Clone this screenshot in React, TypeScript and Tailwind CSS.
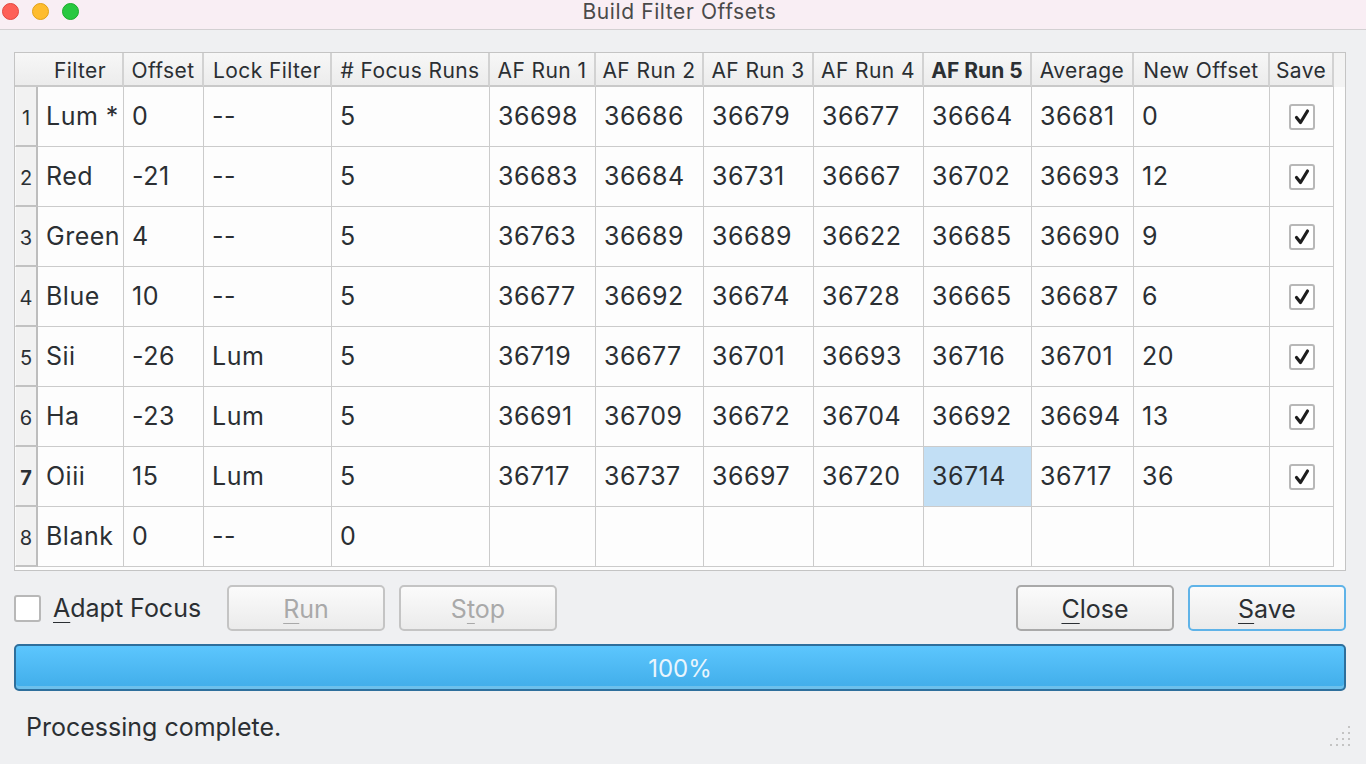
import { Fragment } from 'react'

type Row = {
  name: string
  offset: string
  lock: string
  runs: string
  af: string[]
  avg: string
  newOffset: string
  save: boolean
}

const rows: Row[] = [
  { name: 'Lum *', offset: '0', lock: '--', runs: '5', af: ['36698', '36686', '36679', '36677', '36664'], avg: '36681', newOffset: '0', save: true },
  { name: 'Red', offset: '-21', lock: '--', runs: '5', af: ['36683', '36684', '36731', '36667', '36702'], avg: '36693', newOffset: '12', save: true },
  { name: 'Green', offset: '4', lock: '--', runs: '5', af: ['36763', '36689', '36689', '36622', '36685'], avg: '36690', newOffset: '9', save: true },
  { name: 'Blue', offset: '10', lock: '--', runs: '5', af: ['36677', '36692', '36674', '36728', '36665'], avg: '36687', newOffset: '6', save: true },
  { name: 'Sii', offset: '-26', lock: 'Lum', runs: '5', af: ['36719', '36677', '36701', '36693', '36716'], avg: '36701', newOffset: '20', save: true },
  { name: 'Ha', offset: '-23', lock: 'Lum', runs: '5', af: ['36691', '36709', '36672', '36704', '36692'], avg: '36694', newOffset: '13', save: true },
  { name: 'Oiii', offset: '15', lock: 'Lum', runs: '5', af: ['36717', '36737', '36697', '36720', '36714'], avg: '36717', newOffset: '36', save: true },
  { name: 'Blank', offset: '0', lock: '--', runs: '0', af: ['', '', '', '', ''], avg: '', newOffset: '', save: false },
]

const headers = ['Filter', 'Offset', 'Lock Filter', '# Focus Runs', 'AF Run 1', 'AF Run 2', 'AF Run 3', 'AF Run 4', 'AF Run 5', 'Average', 'New Offset', 'Save']

const cols = 'grid grid-cols-[23px_86px_80px_128px_158px_106px_108px_110px_110px_108px_102px_136px_64px]'

function CheckBox({ checked }: { checked: boolean }) {
  return (
    <span className="w-[26px] h-[26px] rounded-[3px] border-2 border-[#b8b8b8] bg-white flex items-center justify-center">
      {checked && (
        <svg width="18" height="18" viewBox="0 0 18 18">
          <path d="M3.5 9.5 L7.5 14.5 L14.5 3" fill="none" stroke="#1e1e1e" strokeWidth="3.2" strokeLinecap="round" strokeLinejoin="round" />
        </svg>
      )}
    </span>
  )
}

function Btn({ pre, u, post, disabled, variant }: { pre?: string; u: string; post: string; disabled?: boolean; variant?: 'close' | 'default' }) {
  const border = variant === 'default' ? 'border-[#5fb3e8]' : variant === 'close' ? 'border-[#a9a9a9]' : 'border-[#c4c4c4]'
  return (
    <button
      className={`w-[158px] h-[46px] pt-[3px] rounded-[5px] border-2 ${border} bg-gradient-to-b from-[#fbfbfb] to-[#ebebeb] text-[25px] ${disabled ? 'text-[#a9a9a9]' : 'text-[#2b2f33]'}`}
    >
      {pre}
      <span className="underline underline-offset-[5px] decoration-1">{u}</span>
      {post}
    </button>
  )
}

export default function App() {
  return (
    <div className="w-[1366px] h-[764px] bg-[#eff0f2] flex flex-col overflow-hidden text-[#2b2f33]" style={{ fontFamily: 'Inter, "Noto Sans", sans-serif' }}>
      {/* title bar */}
      <div className="h-[30px] shrink-0 bg-[#f9eef4] border-b border-[#d3d0d2] relative flex items-center justify-center">
        <div className="absolute left-[2px] top-[3px] flex gap-[13px]">
          <span className="w-[17px] h-[17px] rounded-full bg-[#fe5f57] border border-[#e2463f]" />
          <span className="w-[17px] h-[17px] rounded-full bg-[#febc2e] border border-[#e1a116]" />
          <span className="w-[17px] h-[17px] rounded-full bg-[#28c840] border border-[#1aab29]" />
        </div>
        <span className="text-[21px] tracking-[0.6px] text-[#4a4a4a] -mt-[6px] -ml-[7px]">Build Filter Offsets</span>
      </div>

      <div className="flex-1 flex flex-col pl-[14px] pr-[20px] pt-[22px]">
        {/* table */}
        <div className="h-[519px] border border-[#c4c4c4] bg-[#fdfdfd] flex flex-col overflow-hidden">
          <div className="bg-[#f3f3f3] h-[34px] shrink-0">
            <div className={`${cols} h-[34px] grid-rows-[34px]`}>
              <div className="bg-gradient-to-b from-[#f7f7f7] to-[#ececec] border-b-2 border-[#c9c9c9]" />
              {headers.map((h) => (
                <div
                  key={h}
                  className={`bg-gradient-to-b from-[#f7f7f7] to-[#ececec] border-b-2 border-r-2 border-b-[#c9c9c9] border-r-[#d2d2d2] flex items-center justify-center pt-[4px] text-[21px] leading-[24px] tracking-[0.4px] whitespace-nowrap ${h === 'AF Run 5' ? 'font-bold tracking-[0px]' : ''}`}
                >
                  {h}
                </div>
              ))}
            </div>
          </div>
          <div className="flex-1">
            {rows.map((r, i) => {
              const sel = i === 6
              const values = [r.name, r.offset, r.lock, r.runs, ...r.af, r.avg, r.newOffset]
              return (
                <div key={i} className={`${cols} h-[60px] grid-rows-[60px]`}>
                  <div className={`bg-[#f2f2f2] border-l border-l-[#fafafa] border-r-2 border-r-[#bdbdbd] border-b-2 border-b-[#c2c2c2] flex items-center justify-center pt-[4px] text-[20px] ${sel ? 'font-bold' : ''}`}>
                    {i + 1}
                  </div>
                  {values.map((v, j) => (
                    <Fragment key={j}>
                      <div
                        className={`border-r border-b border-[#cbcbcb] flex items-center pl-[8px] text-[25px] tracking-[0.5px] whitespace-nowrap ${sel && j === 8 ? 'bg-[#c2dff5]' : ''}`}
                      >
                        {v}
                      </div>
                    </Fragment>
                  ))}
                  <div className="border-r border-b border-[#cbcbcb] flex items-center justify-center">
                    {r.save && <CheckBox checked />}
                  </div>
                </div>
              )
            })}
          </div>
        </div>

        {/* controls */}
        <div className="mt-[14px] h-[46px] flex items-center">
          <div className="flex items-center gap-[12px] w-[213px]">
            <span className="w-[27px] h-[27px] rounded-[3px] border-2 border-[#b8b8b8] bg-white" />
            <span className="text-[25px] pt-[2px]">
              <span className="underline underline-offset-[5px] decoration-1">A</span>dapt Focus
            </span>
          </div>
          <div className="flex gap-[14px]">
            <Btn u="R" post="un" disabled />
            <Btn pre="S" u="t" post="op" disabled />
          </div>
          <div className="flex-1" />
          <div className="flex gap-[14px]">
            <Btn u="C" post="lose" variant="close" />
            <Btn u="S" post="ave" variant="default" />
          </div>
        </div>

        {/* progress */}
        <div className="mt-[13px] h-[47px] pt-[3px] rounded-[5px] border-2 border-[#2e6f9c] bg-gradient-to-b from-[#5cc6fe] to-[#40ade9] flex items-center justify-center text-[24px] text-[#e9f5fd] shadow-[inset_0_-3px_0_#6cc0ec]">
          100%
        </div>

        {/* status */}
        <div className="flex-1 flex items-center justify-between pl-[12px]">
          <span className="text-[25px]">Processing complete.</span>
          <svg width="24" height="22" viewBox="0 0 24 22" className="mt-[14px] -mr-[6px]">
            {[[20, 2], [14, 8], [20, 8], [8, 14], [14, 14], [20, 14], [2, 20], [8, 20], [14, 20], [20, 20]].map(([x, y], k) => (
              <rect key={k} x={x} y={y} width="2" height="2" fill="#c4c4c4" />
            ))}
          </svg>
        </div>
      </div>
    </div>
  )
}
